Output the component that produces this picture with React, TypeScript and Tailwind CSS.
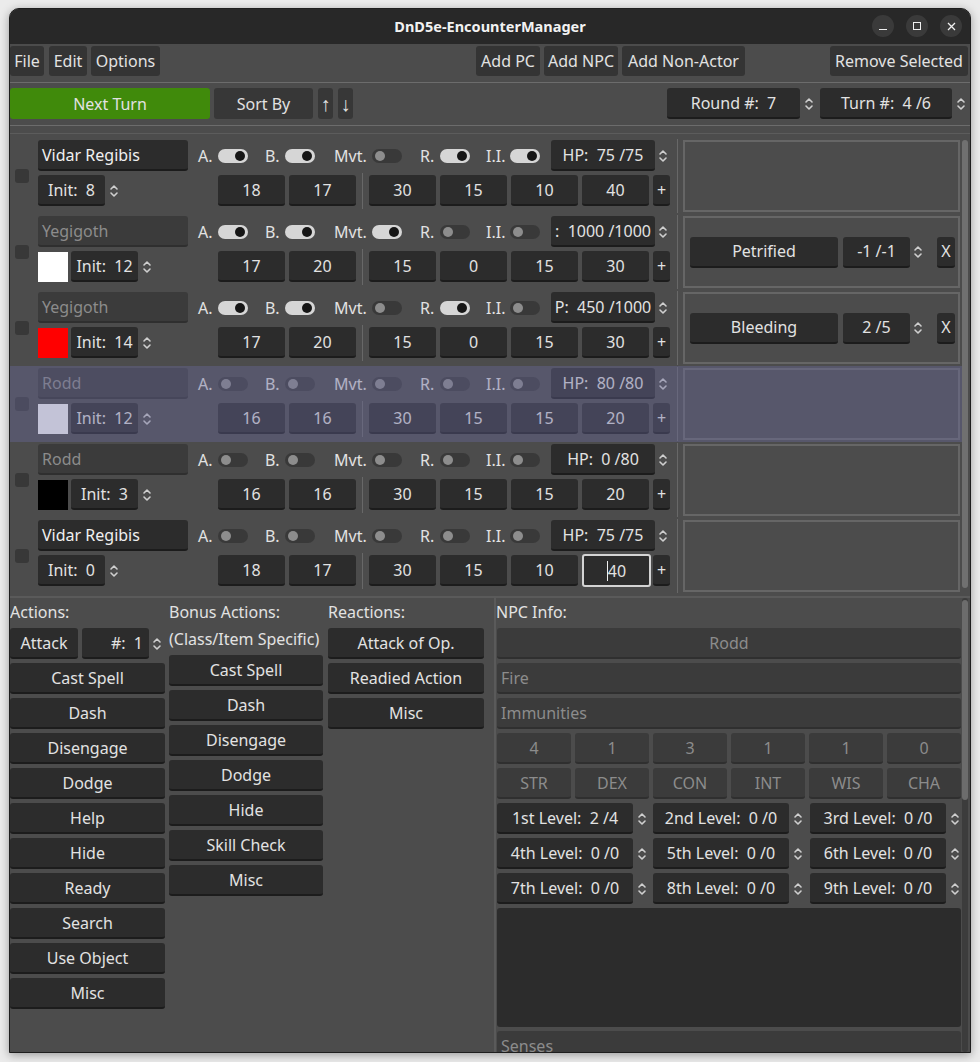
import React from 'react';

type RowData = {
  name: string;
  pc?: boolean;
  swatch?: string;
  init: string;
  toggles: boolean[];
  hp: string;
  stats: number[];
  cond?: { name: string; val: string };
  highlight?: boolean;
  focusLast?: boolean;
};

const rows: RowData[] = [
  { name: 'Vidar Regibis', pc: true, init: '8', toggles: [true, true, false, true, true], hp: 'HP:  75 /75', stats: [18, 17, 30, 15, 10, 40] },
  { name: 'Yegigoth', swatch: 'bg-[#ffffff]', init: '12', toggles: [true, true, true, false, false], hp: ':  1000 /1000', stats: [17, 20, 15, 0, 15, 30], cond: { name: 'Petrified', val: '-1 /-1' } },
  { name: 'Yegigoth', swatch: 'bg-[#ff0000]', init: '14', toggles: [true, true, false, true, false], hp: 'P:  450 /1000', stats: [17, 20, 15, 0, 15, 30], cond: { name: 'Bleeding', val: '2 /5' } },
  { name: 'Rodd', swatch: 'bg-[#ffffff]', init: '12', toggles: [false, false, false, false, false], hp: 'HP:  80 /80', stats: [16, 16, 30, 15, 15, 20], highlight: true },
  { name: 'Rodd', swatch: 'bg-[#000000]', init: '3', toggles: [false, false, false, false, false], hp: 'HP:  0 /80', stats: [16, 16, 30, 15, 15, 20] },
  { name: 'Vidar Regibis', pc: true, init: '0', toggles: [false, false, false, false, false], hp: 'HP:  75 /75', stats: [18, 17, 30, 15, 10, 40], focusLast: true },
];

const groups = [
  { l: 'A.', w: 'w-[50px]', m: 'mr-[17px]' },
  { l: 'B.', w: 'w-[50px]', m: 'mr-[19px]' },
  { l: 'Mvt.', w: 'w-[68px]', m: 'mr-[18px]' },
  { l: 'R.', w: 'w-[50px]', m: 'mr-[16px]' },
  { l: 'I.I.', w: 'w-[54px]', m: 'mr-[11px]' },
];

const dark = 'bg-[#2c2c2c] border-b-2 border-[#1c1c1c] rounded-[3px]';
const soft = 'bg-[#3b3b3b] border-b-2 border-[#2f2f2f] rounded-[3px] text-[#8c8c8c]';
const menu = 'h-[30px] bg-[#343434] rounded-[3px] flex items-center justify-center';

function Arrows() {
  return (
    <svg width="10" height="16" viewBox="0 0 10 16" fill="none" stroke="#cfcfcf" strokeWidth="1.6" strokeLinecap="round" strokeLinejoin="round">
      <path d="M2 6 L5 3 L8 6" />
      <path d="M2 10 L5 13 L8 10" />
    </svg>
  );
}

function Toggle({ on }: { on: boolean }) {
  return (
    <div className={`w-[30px] h-[14px] rounded-full flex items-center px-[3px] ${on ? 'bg-[#d6d6d6] justify-end' : 'bg-[#393939] justify-start'}`}>
      <div className={`w-[10px] h-[10px] rounded-full ${on ? 'bg-[#161616]' : 'bg-[#8d8d8d]'}`} />
    </div>
  );
}

function Btn({ children, className = '' }: { children?: React.ReactNode; className?: string }) {
  return <div className={`${dark} h-[31px] flex items-center justify-center whitespace-pre ${className}`}>{children}</div>;
}

function Row({ r }: { r: RowData }) {
  const s = r.stats;
  return (
    <div className="relative flex h-[76px]">
      <div className="w-[28px] flex items-center pl-[5px]">
        <div className="w-[14px] h-[14px] rounded-[3px] bg-[#383838]" />
      </div>
      <div className="w-[150px] pt-[2px] flex flex-col gap-[4px]">
        <div className={`h-[31px] flex items-center px-[4px] ${r.pc ? `${dark} text-[#f0f0f0]` : soft}`}>{r.name}</div>
        <div className="flex items-center h-[31px]">
          {r.swatch && <div className={`w-[30px] h-[30px] mr-[3px] ${r.swatch}`} />}
          <Btn className="w-[67px]">{`Init:  ${r.init}`}</Btn>
          <div className="ml-[4px]"><Arrows /></div>
        </div>
      </div>
      <div className="ml-[10px] w-[472px] pt-[2px] flex flex-col gap-[4px]">
        <div className="h-[31px] flex items-center">
          {groups.map((g, i) => (
            <div key={i} className={`flex items-center justify-between ${g.w} ${g.m}`}>
              <span>{g.l}</span>
              <Toggle on={r.toggles[i]} />
            </div>
          ))}
          <Btn className="w-[104px] overflow-hidden">{r.hp}</Btn>
          <div className="ml-[3px]"><Arrows /></div>
        </div>
        <div className="h-[31px] flex items-center pl-[20px]">
          <div className="flex gap-[4px]">
            <Btn className="w-[67px]">{s[0]}</Btn>
            <Btn className="w-[67px]">{s[1]}</Btn>
          </div>
          <div className="mx-[6px] w-px h-[36px] bg-[#686868]" />
          <div className="flex gap-[4px]">
            <Btn className="w-[67px]">{s[2]}</Btn>
            <Btn className="w-[67px]">{s[3]}</Btn>
            <Btn className="w-[67px]">{s[4]}</Btn>
            {r.focusLast ? (
              <div className="w-[69px] h-[33px] -my-px rounded-[3px] bg-[#2c2c2c] border-2 border-[#d4d4d4] flex items-center justify-center">
                <span className="w-px h-[20px] bg-[#f0f0f0]" />
                <span>{s[5]}</span>
              </div>
            ) : (
              <Btn className="w-[67px]">{s[5]}</Btn>
            )}
            <Btn className={`w-[17px] ${r.focusLast ? 'ml-[-2px]' : ''}`}>+</Btn>
          </div>
        </div>
      </div>
      <div className="ml-[7px] w-px my-[1px] bg-[#686868]" />
      <div className="ml-[5px] w-[277px] my-[2px] border-2 border-[#666666] flex items-center pl-[5px]">
        {r.cond && (
          <>
            <Btn className="w-[148px] h-[30px]">{r.cond.name}</Btn>
            <Btn className="ml-[5px] w-[67px] h-[30px]">{r.cond.val}</Btn>
            <div className="ml-[3px]"><Arrows /></div>
            <Btn className="ml-[14px] w-[18px] h-[30px]">X</Btn>
          </>
        )}
      </div>
      {r.highlight && <div className="absolute inset-0 bg-[#6a6a9c]/40 pointer-events-none" />}
    </div>
  );
}

const actions = ['Cast Spell', 'Dash', 'Disengage', 'Dodge', 'Help', 'Hide', 'Ready', 'Search', 'Use Object', 'Misc'];
const bonus = ['Cast Spell', 'Dash', 'Disengage', 'Dodge', 'Hide', 'Skill Check', 'Misc'];
const reactions = ['Attack of Op.', 'Readied Action', 'Misc'];
const mods = ['4', '1', '3', '1', '1', '0'];
const abil = ['STR', 'DEX', 'CON', 'INT', 'WIS', 'CHA'];
const slots = ['1st Level:  2 /4', '2nd Level:  0 /0', '3rd Level:  0 /0', '4th Level:  0 /0', '5th Level:  0 /0', '6th Level:  0 /0', '7th Level:  0 /0', '8th Level:  0 /0', '9th Level:  0 /0'];

export default function App() {
  return (
    <div className="w-[980px] h-[1062px] bg-[#ebebeb] pt-[8px] pl-[9px] font-['Noto_Sans','Open_Sans',sans-serif] text-[16px] text-[#e2e2e2] overflow-hidden">
      <div className="w-[962px] h-[1045px] rounded-t-[10px] overflow-hidden border border-[#1e1e1e] bg-[#4c4c4c] shadow-[0_2px_10px_rgba(0,0,0,0.35)] flex flex-col">
        {/* title bar */}
        <div className="h-[35px] bg-[#282828] relative flex items-center justify-center shrink-0">
          <span className="font-bold text-[14.5px] text-[#f2f2f2]">DnD5e-EncounterManager</span>
          <div className="absolute right-[8px] top-[6px] flex gap-[12px]">
            <div className="w-[22px] h-[22px] rounded-full bg-[#3a3a3a] flex items-end justify-center pb-[7px]">
              <div className="w-[8px] h-px bg-[#f0f0f0]" />
            </div>
            <div className="w-[22px] h-[22px] rounded-full bg-[#3a3a3a] flex items-center justify-center">
              <div className="w-[8px] h-[8px] border border-[#f0f0f0]" />
            </div>
            <div className="w-[22px] h-[22px] rounded-full bg-[#3a3a3a] flex items-center justify-center">
              <svg width="9" height="9" viewBox="0 0 9 9" stroke="#f0f0f0" strokeWidth="1.3"><path d="M1 1 L8 8 M8 1 L1 8" /></svg>
            </div>
          </div>
        </div>

        {/* menu row */}
        <div className="h-[38px] pt-[2px] flex shrink-0">
          <div className={`${menu} w-[34px]`}>File</div>
          <div className={`${menu} ml-[5px] w-[38px]`}>Edit</div>
          <div className={`${menu} ml-[4px] w-[69px]`}>Options</div>
          <div className={`${menu} ml-[316px] w-[64px]`}>Add PC</div>
          <div className={`${menu} ml-[4px] w-[74px]`}>Add NPC</div>
          <div className={`${menu} ml-[4px] w-[123px]`}>Add Non-Actor</div>
          <div className={`${menu} ml-auto mr-[2px] w-[138px]`}>Remove Selected</div>
        </div>
        <div className="h-px bg-[#6c6c6c] shrink-0" />

        {/* toolbar */}
        <div className="h-[42px] pt-[5px] flex shrink-0">
          <div className="w-[200px] h-[31px] bg-[#408a0b] rounded-[3px] flex items-center justify-center">Next Turn</div>
          <div className="ml-[4px] w-[99px] h-[31px] bg-[#373737] rounded-[3px] flex items-center justify-center">Sort By</div>
          <div className="ml-[5px] w-[15px] h-[31px] bg-[#373737] rounded-[3px] flex items-center justify-center text-[20px]">↑</div>
          <div className="ml-[5px] w-[15px] h-[31px] bg-[#373737] rounded-[3px] flex items-center justify-center text-[20px]">↓</div>
          <div className="ml-auto flex items-center h-[31px]">
            <Btn className="w-[133px]">{'Round #:  7'}</Btn>
            <div className="ml-[4px]"><Arrows /></div>
            <Btn className="ml-[6px] w-[132px]">{'Turn #:  4 /6'}</Btn>
            <div className="ml-[4px] mr-[4px]"><Arrows /></div>
          </div>
        </div>
        <div className="h-px bg-[#6c6c6c] shrink-0" />

        {/* list */}
        <div className="pt-[7px] shrink-0">
          <div className="h-px bg-[#5c5c5c]" />
          <div className="flex pt-[4px]">
            <div className="w-[952px]">
              {rows.map((r, i) => <Row key={i} r={r} />)}
            </div>
            <div className="w-[6px] my-[2px] mb-[6px] rounded-full bg-[#707070]" />
          </div>
        </div>

        {/* bottom */}
        <div className="mt-[2px] border-t-2 border-[#5a5a5a] flex flex-1 min-h-0">
          <div className="w-[481px] pt-[2px]">
            <div className="flex">
              <div className="w-[155px] flex flex-col gap-[4px]">
                <div className="h-[24px] leading-[24px]">Actions:</div>
                <div className="flex items-center">
                  <Btn className="w-[68px]">Attack</Btn>
                  <Btn className="ml-[4px] w-[67px] justify-end pr-[6px]">{'#:  1'}</Btn>
                  <div className="ml-[3px]"><Arrows /></div>
                </div>
                {actions.map((a) => <Btn key={a} className="w-[155px]">{a}</Btn>)}
              </div>
              <div className="ml-[4px] w-[154px] flex flex-col gap-[4px]">
                <div className="h-[24px] leading-[24px]">Bonus Actions:</div>
                <div className="h-[24px] leading-[24px] -mt-[1px] whitespace-nowrap">(Class/Item Specific)</div>
                {bonus.map((a) => <Btn key={a} className="w-[154px]">{a}</Btn>)}
              </div>
              <div className="ml-[5px] w-[156px] flex flex-col gap-[4px]">
                <div className="h-[24px] leading-[24px]">Reactions:</div>
                {reactions.map((a) => <Btn key={a} className="w-[156px]">{a}</Btn>)}
              </div>
            </div>
          </div>
          <div className="ml-[3px] w-[2px] bg-[#5a5a5a]" />
          <div className="pl-[1px] pt-[2px] w-[465px] flex flex-col gap-[4px]">
            <div className="h-[24px] leading-[24px] -ml-[1px]">NPC Info:</div>
            <div className={`h-[31px] shrink-0 flex items-center justify-center ${soft}`}>Rodd</div>
            <div className={`h-[31px] shrink-0 flex items-center px-[4px] ${soft}`}>Fire</div>
            <div className={`h-[31px] shrink-0 flex items-center px-[4px] ${soft}`}>Immunities</div>
            <div className="grid grid-cols-6 gap-[4px] shrink-0">
              {mods.map((m, i) => <div key={i} className={`h-[31px] flex items-center justify-center ${soft}`}>{m}</div>)}
            </div>
            <div className="grid grid-cols-6 gap-[4px] shrink-0">
              {abil.map((m) => <div key={m} className={`h-[31px] flex items-center justify-center ${soft}`}>{m}</div>)}
            </div>
            <div className="grid grid-cols-[156px_157px_152px] gap-y-[4px] shrink-0">
              {slots.map((sl) => (
                <div key={sl} className="flex items-center">
                  <Btn className="w-[136px]">{sl}</Btn>
                  <div className="ml-[4px]"><Arrows /></div>
                </div>
              ))}
            </div>
            <div className="h-[119px] shrink-0 bg-[#2c2c2c] rounded-[3px]" />
            <div className={`h-[31px] shrink-0 flex items-start pt-[3px] px-[4px] ${soft}`}>Senses</div>
          </div>
          <div className="ml-[1px] w-[6px] pt-[2px] flex flex-col bg-[#3c3c3c] rounded-full">
            <div className="h-[200px] rounded-full bg-[#6c6c6c]" />
          </div>
        </div>
      </div>
    </div>
  );
}
